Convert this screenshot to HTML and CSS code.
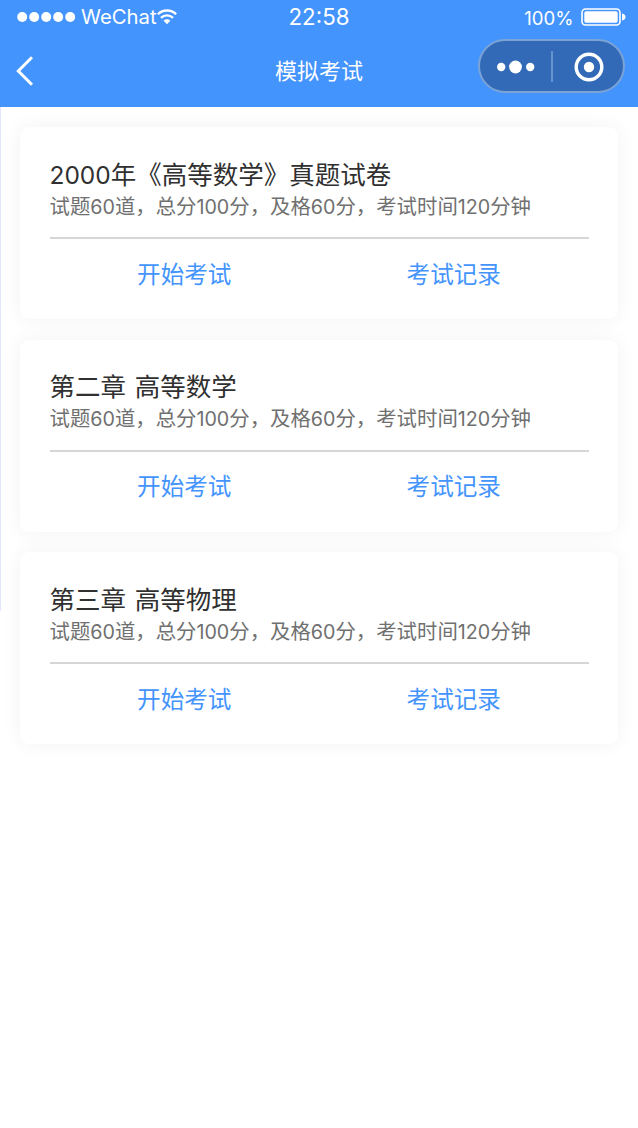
FILE: index.html
```html
<!DOCTYPE html>
<html lang="zh-CN">
<head>
<meta charset="utf-8">
<title>模拟考试</title>
<link rel="stylesheet" href="styles.css">
</head>
<body>
<header class="header">
  <div class="status">
    <div class="carrier">
      <svg class="signal" width="60" height="12" viewBox="0 0 60 12" fill="#fff"><circle cx="5.2" cy="6" r="5"/><circle cx="17.2" cy="6" r="5"/><circle cx="29.2" cy="6" r="5"/><circle cx="41.2" cy="6" r="5"/><circle cx="53.2" cy="6" r="5"/></svg>
      <span class="carrier-name">WeChat</span>
      <svg class="wifi" width="20" height="16" viewBox="0 0 20 16" fill="none" stroke="#fff" stroke-width="2.3"><path d="M.8 5.3a13 13 0 0 1 18.4 0M4 8.9a8.5 8.5 0 0 1 12 0"/><path d="M6.6 11.7a4.8 4.8 0 0 1 6.8 0L10 15.3z" fill="#fff" stroke="none"/></svg>
    </div>
    <span class="time">22:58</span>
    <div class="power">
      <span class="percent">100%</span>
      <svg width="45" height="18" viewBox="0 0 45 18"><rect x="1" y="1" width="38" height="16" rx="3.5" fill="none" stroke="#fff" stroke-width="1.6"/><rect x="3.3" y="3.3" width="33.4" height="11.4" rx="1.8" fill="#fff"/><path d="M41 5.5q3.5.8 3.5 3.5T41 12.5z" fill="#fff"/></svg>
    </div>
  </div>
  <nav class="nav">
    <svg class="back" width="20" height="32" viewBox="0 0 20 32" fill="none" stroke="#fff" stroke-width="3"><path d="M17 2.2 3.3 16 17 29.8"/></svg>
    <h1 class="nav-title">模拟考试</h1>
    <div class="capsule">
      <svg width="40" height="14" viewBox="0 0 40 14" fill="#fff"><circle cx="5.2" cy="7" r="4.2"/><circle cx="19.5" cy="7" r="6.4"/><circle cx="34.2" cy="7" r="4.2"/></svg>
      <span class="divider"></span>
      <svg width="30" height="30" viewBox="0 0 30 30"><circle cx="15" cy="15" r="12.8" fill="none" stroke="#fff" stroke-width="3.4"/><circle cx="15" cy="15" r="5.2" fill="#fff"/></svg>
    </div>
  </nav>
</header>
<main class="list">
  <section class="card">
    <h2 class="title"><span class="num">2000</span>年《高等数学》真题试卷</h2>
    <p class="info">试题<span class="num">60</span>道，总分<span class="num">100</span>分，及格<span class="num">60</span>分，考试时间<span class="num">120</span>分钟</p>
    <div class="actions"><a class="action">开始考试</a><a class="action">考试记录</a></div>
  </section>
  <section class="card">
    <h2 class="title">第二章 高等数学</h2>
    <p class="info">试题<span class="num">60</span>道，总分<span class="num">100</span>分，及格<span class="num">60</span>分，考试时间<span class="num">120</span>分钟</p>
    <div class="actions"><a class="action">开始考试</a><a class="action">考试记录</a></div>
  </section>
  <section class="card">
    <h2 class="title">第三章 高等物理</h2>
    <p class="info">试题<span class="num">60</span>道，总分<span class="num">100</span>分，及格<span class="num">60</span>分，考试时间<span class="num">120</span>分钟</p>
    <div class="actions"><a class="action">开始考试</a><a class="action">考试记录</a></div>
  </section>
</main>
</body>
</html>
```
FILE: styles.css
```css
* { box-sizing: border-box; }
body {
  margin: 0;
  min-height: 1128px;
  background: #fff;
  font-family: "Noto Sans CJK SC", sans-serif;
}
h1, h2, p { margin: 0; font-weight: 400; }
svg { display: block; flex: none; }
.header { height: 107px; background: #4494fe; color: #fff; }
.status {
  display: grid;
  grid-template-columns: 1fr auto 1fr;
  height: 34px;
  padding: 0 12px;
  align-items: center;
  font-family: Inter, sans-serif;
}
.carrier { display: flex; align-items: center; padding-left: 5px; }
.carrier-name { margin-left: 4px; font-size: 20.3px; line-height: 34px; }
.wifi { margin-left: 0; }
.time { font-size: 22.3px; line-height: 32px; }
.power { display: flex; align-items: center; justify-content: flex-end; gap: 7.5px; }
.percent { padding-top: 2px; font-size: 18.6px; }
.nav {
  display: grid;
  grid-template-columns: 1fr auto 1fr;
  align-items: center;
  height: 73px;
  padding: 0 13px;
}
.back { margin: 1px 0 0 2px; }
.nav-title { margin-top: -4px; font-size: 22px; font-weight: 400; line-height: 32px; }
.capsule {
  justify-self: end;
  display: flex;
  align-items: center;
  width: 147px;
  height: 54px;
  margin-top: -9px;
  padding: 2px 19px 0 16px;
  justify-content: space-between;
  border: 2px solid #7ba3d5;
  border-radius: 27px;
  background: #326ab8;
}
.divider { width: 2px; height: 31px; margin: -2px 0 0 -6px; background: #6593cf; }
.list {
  display: flex;
  flex-direction: column;
  gap: 20.6px;
  padding: 20px 20px 0;
  background: linear-gradient(#e1e6fc, #e1e6fc) 0 0 / 1px 504px no-repeat;
}
.card {
  height: 192px;
  padding: 27.5px 29.5px 0;
  border-radius: 9px;
  background: #fff;
  box-shadow: 0 0 20px rgba(0, 0, 0, .055);
}
.title { height: 36px; color: #303030; font-size: 25.5px; line-height: 36px; white-space: pre; word-spacing: 3px; }
.info { height: 28px; color: #707070; font-size: 20.4px; line-height: 29px; white-space: nowrap; }
.num { font-family: Inter, sans-serif; font-size: .965em; line-height: 1; }
.title .num { font-size: .96em; }
.actions {
  display: flex;
  margin-top: 18.7px;
  border-top: 2px solid #d6d6d6;
  padding-top: 16.4px;
}
.action { flex: 1; text-align: center; color: #4494fe; font-size: 23.6px; line-height: 34px; }
```
